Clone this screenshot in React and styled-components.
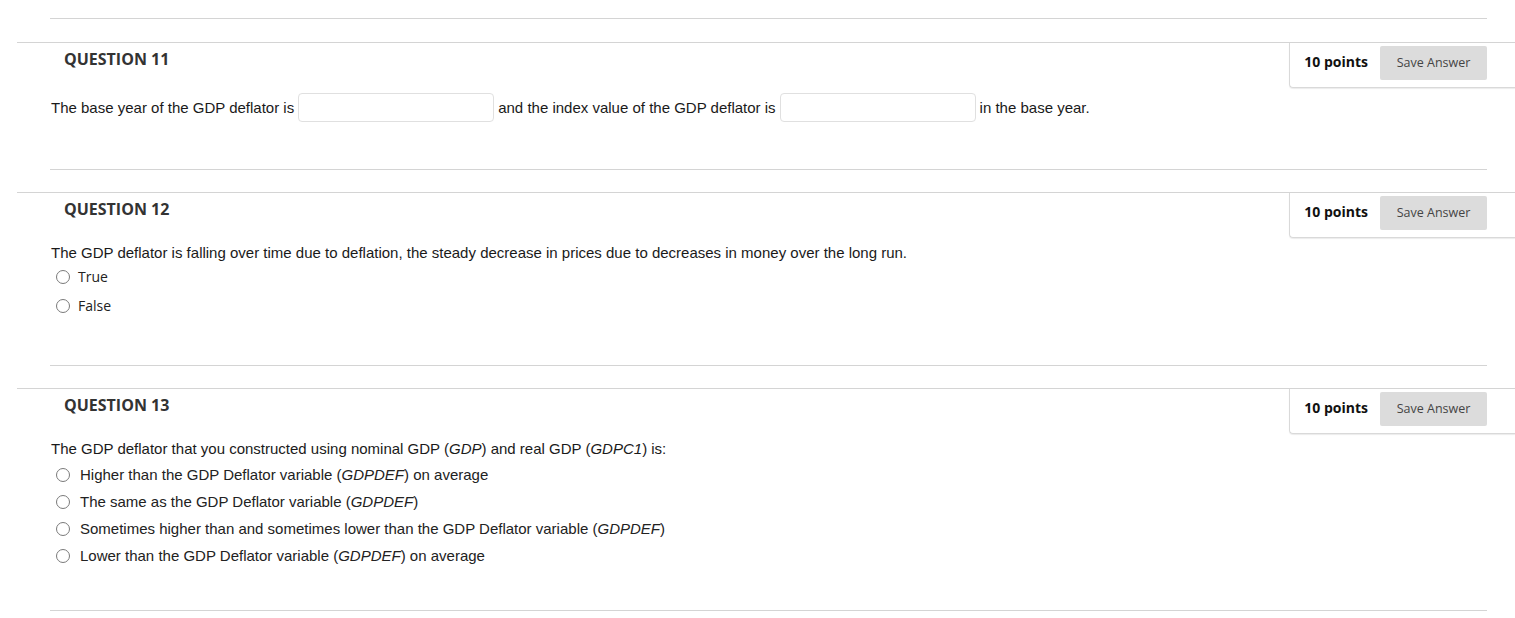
import React from 'react';
import styled, { createGlobalStyle } from 'styled-components';

const GlobalStyle = createGlobalStyle`
  body {
    margin: 0;
    background: #fff;
    font-family: "Liberation Sans", Arial, sans-serif;
  }
`;

const Page = styled.div`
  padding-top: 18px;
  width: 1515px;
`;

const Divider = styled.hr`
  border: 0;
  height: 1px;
  background: #d4d4d4;
  margin: 0 28px 0 50px;
`;

const Block = styled.section`
  margin: ${(p) => p.$gap}px 0 0 17px;
  border-top: 1px solid #d4d4d4;
  padding-bottom: ${(p) => p.$bottom}px;
`;

const Header = styled.div`
  display: flex;
  justify-content: space-between;
  align-items: flex-start;
`;

const Title = styled.h3`
  margin: 0;
  padding: 5px 0 0 47px;
  font-family: "Open Sans", sans-serif;
  font-size: 16px;
  line-height: 22px;
  font-weight: 700;
  color: #333;
`;

const PointsBox = styled.div`
  display: flex;
  align-items: center;
  gap: 12px;
  padding: 3px 28px 7px 14px;
  border-left: 1px solid #d9d9d9;
  border-bottom: 1px solid #d9d9d9;
  border-bottom-left-radius: 4px;
  box-shadow: 0 1px 1px rgba(0, 0, 0, 0.08);
`;

const Points = styled.span`
  font-family: "Open Sans", sans-serif;
  font-size: 14px;
  line-height: 18px;
  font-weight: 700;
  color: #111;
  margin-top: -2px;
`;

const SaveButton = styled.button`
  width: 107px;
  height: 34px;
  border: 0;
  border-radius: 2px;
  background: #dcdcdc;
  font-family: "Open Sans", sans-serif;
  font-size: 12.5px;
  color: #444;
  padding: 0 0 2px;
  cursor: pointer;
`;

const Body = styled.div`
  padding-left: 34px;
  margin-top: ${(p) => p.$top}px;
  font-size: 15px;
  color: #1a1a1a;
`;

const FillRow = styled.div`
  display: flex;
  align-items: center;
  gap: 4px;
  height: 29px;
`;

const Blank = styled.input`
  width: 196px;
  height: 29px;
  box-sizing: border-box;
  border: 1px solid #e0e0e0;
  border-radius: 4px;
  margin: 0;
`;

const Prompt = styled.p`
  margin: 0;
  line-height: 18px;
`;

const Options = styled.div`
  margin-top: ${(p) => p.$top}px;
`;

const Option = styled.label`
  display: flex;
  align-items: center;
  gap: ${(p) => p.$gap}px;
  height: ${(p) => p.$h}px;
  padding-left: 5px;
  font-family: ${(p) => (p.$sans ? '"Open Sans", sans-serif' : '"Liberation Sans", Arial, sans-serif')};
  font-size: ${(p) => (p.$sans ? 14 : 15)}px;
  color: #222;
`;

const Radio = styled.span`
  width: 14px;
  height: 14px;
  box-sizing: border-box;
  border: 1px solid #7a7a7a;
  border-radius: 50%;
  flex-shrink: 0;
`;

const Points10 = () => (
  <PointsBox>
    <Points>10 points</Points>
    <SaveButton>Save Answer</SaveButton>
  </PointsBox>
);

const q13Options = [
  <>Higher than the GDP Deflator variable (<i>GDPDEF</i>) on average</>,
  <>The same as the GDP Deflator variable (<i>GDPDEF</i>)</>,
  <>Sometimes higher than and sometimes lower than the GDP Deflator variable (<i>GDPDEF</i>)</>,
  <>Lower than the GDP Deflator variable (<i>GDPDEF</i>) on average</>,
];

const App = () => {
  return (
    <Page>
      <GlobalStyle />
      <Divider />
      <Block $gap={23} $bottom={47}>
        <Header>
          <Title>QUESTION 11</Title>
          <Points10 />
        </Header>
        <Body $top={5}>
          <FillRow>
            The base year of the GDP deflator is
            <Blank />
            and the index value of the GDP deflator is
            <Blank />
            in the base year.
          </FillRow>
        </Body>
      </Block>
      <Divider />
      <Block $gap={22} $bottom={45}>
        <Header>
          <Title>QUESTION 12</Title>
          <Points10 />
        </Header>
        <Body $top={6}>
          <Prompt>
            The GDP deflator is falling over time due to deflation, the steady decrease in prices due to decreases in money over the long run.
          </Prompt>
          <Options $top={0}>
            <Option $sans $gap={8} $h={29}><Radio /><span>True</span></Option>
            <Option $sans $gap={8} $h={29}><Radio /><span>False</span></Option>
          </Options>
        </Body>
      </Block>
      <Divider />
      <Block $gap={22} $bottom={41}>
        <Header>
          <Title>QUESTION 13</Title>
          <Points10 />
        </Header>
        <Body $top={6}>
          <Prompt>
            The GDP deflator that you constructed using nominal GDP (<i>GDP</i>) and real GDP (<i>GDPC1</i>) is:
          </Prompt>
          <Options $top={3}>
            {q13Options.map((o, i) => (
              <Option key={i} $gap={10} $h={27}><Radio /><span>{o}</span></Option>
            ))}
          </Options>
        </Body>
      </Block>
      <Divider />
    </Page>
  );
};

export default App;
